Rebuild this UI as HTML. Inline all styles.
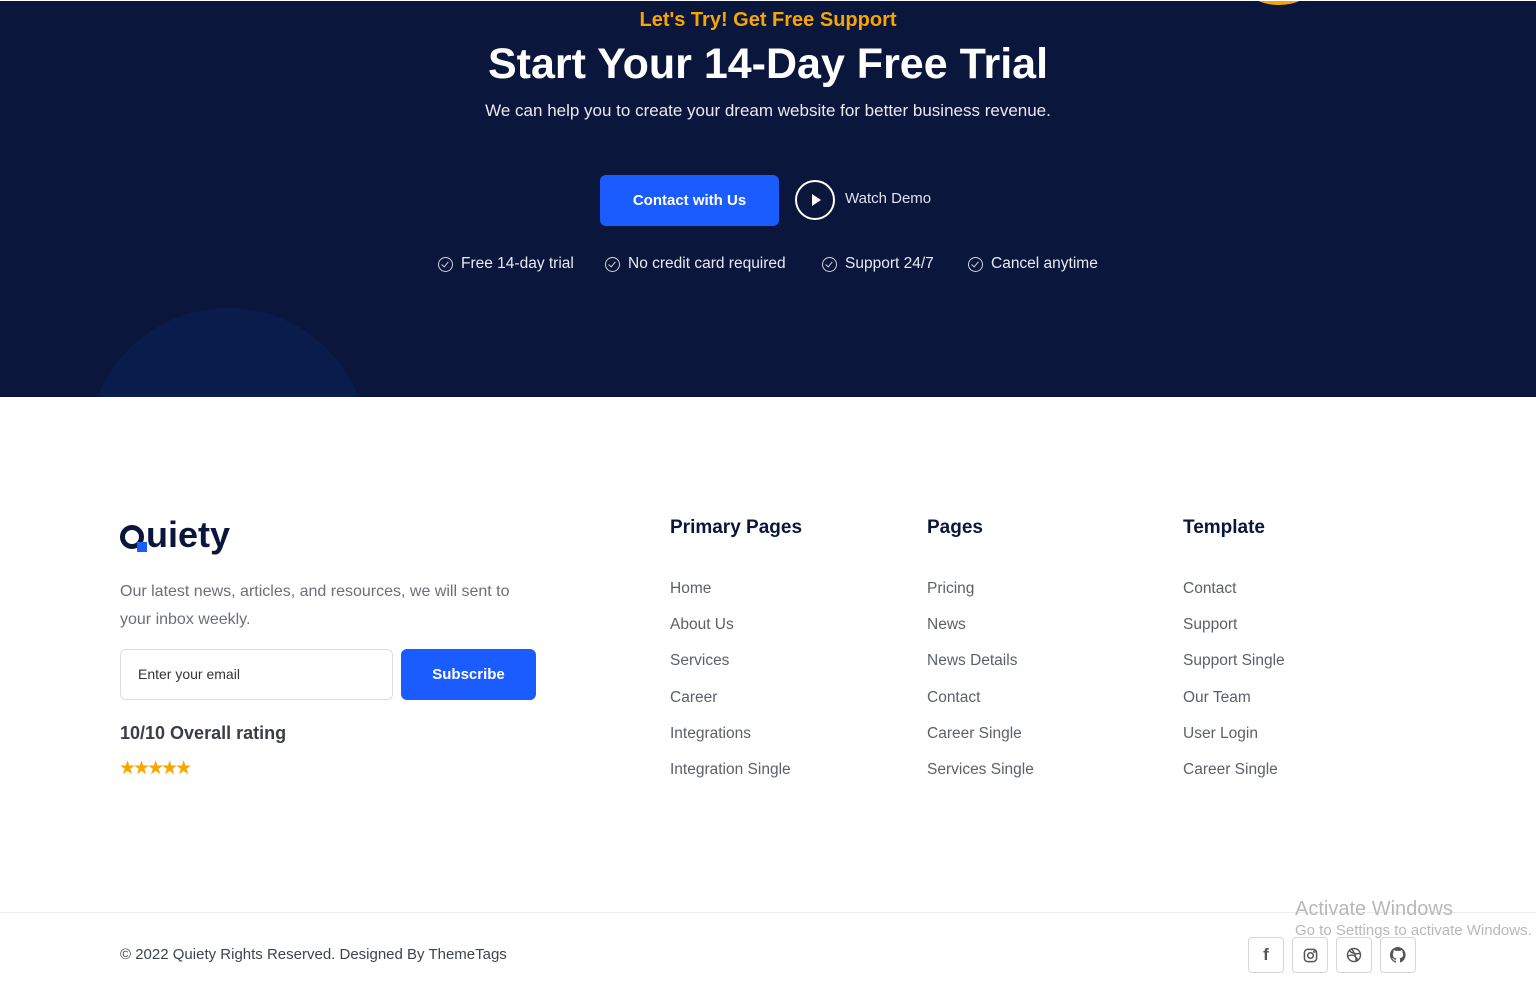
<!DOCTYPE html>
<html><head><style>
*{margin:0;padding:0;box-sizing:border-box}
body{width:1536px;height:990px;overflow:hidden;background:#fff;font-family:"Liberation Sans",sans-serif;position:relative}
.hero{position:absolute;left:0;top:0;width:1536px;height:397px;background:#0b163d;overflow:hidden;border-top:1px solid #fff}
.blob{position:absolute;left:88px;top:307px;width:280px;height:280px;border-radius:50%;background:#0a1c4c}
.sun{position:absolute;left:1248px;top:-28px;width:62px;height:32px;border-radius:50%;background:#f7a600}
.c{position:absolute;left:0;width:1536px;text-align:center}
.tag{top:8px;color:#f7a600;font-weight:bold;font-size:20px}
h1{top:39px;color:#fff;font-size:43px;font-weight:bold;letter-spacing:0}
.sub{top:100px;color:#e8eaf0;font-size:17px}
.btn{position:absolute;left:600px;top:174px;width:179px;height:51px;background:#1a5cff;color:#fff;border-radius:6px;font-weight:bold;font-size:15px;text-align:center;line-height:51px}
.play{position:absolute;left:795px;top:179px;width:40px;height:40px;border:2px solid #fff;border-radius:50%}
.play:after{content:"";position:absolute;left:15px;top:12px;border-left:9px solid #fff;border-top:6px solid transparent;border-bottom:6px solid transparent}
.wd{position:absolute;left:845px;top:189px;color:#dfe2ea;font-size:15px}
.feat{position:absolute;top:254px;color:#e8eaf0;font-size:15.5px;display:flex;align-items:center;gap:8px}
.feat i{width:15px;height:15px;border:1.5px solid #cfd3dd;border-radius:50%;display:inline-block;position:relative}
.feat i:after{content:"";position:absolute;left:4px;top:2px;width:3px;height:6px;border:solid #cfd3dd;border-width:0 1.5px 1.5px 0;transform:rotate(40deg)}
.logo{position:absolute;left:120px;top:514px;font-size:36px;font-weight:bold;color:#0b163d}
.desc{position:absolute;left:120px;top:578px;width:415px;color:#6b6f7b;font-size:16px;line-height:28px}
.inp{position:absolute;left:120px;top:649px;width:273px;height:51px;border:1.5px solid #dcdde2;border-radius:6px;padding-left:17px;line-height:49px;font-size:14px;color:#333}
.sbtn{position:absolute;left:401px;top:649px;width:135px;height:51px;background:#1a5cff;border-radius:6px;color:#fff;font-weight:bold;font-size:15px;text-align:center;line-height:51px}
.rate{position:absolute;left:120px;top:723px;font-size:18px;font-weight:bold;color:#3a3d48}
.stars{position:absolute;left:119px;top:757px;color:#f7a600;font-size:19px;letter-spacing:-3px}
.col{position:absolute;top:517px}
.col h3{font-size:19px;color:#0b163d;margin-bottom:41px;font-weight:bold}
.col a{display:block;color:#5c606b;font-size:15.5px;height:36.2px;text-decoration:none}
.line{position:absolute;left:0;top:912px;width:1536px;height:1px;background:#ebecef}
.copy{position:absolute;left:120px;top:946px;font-size:15px;color:#3f4350}
.soc{position:absolute;top:937px;width:36px;height:36px;border:1.5px solid #d6d7db;border-radius:4px;display:flex;align-items:center;justify-content:center}
.aw{position:absolute;left:1295px;top:898px;color:#b8b8b8;font-size:20px}
.aw2{position:absolute;left:1295px;top:922px;color:#b8b8b8;font-size:15px}
</style></head><body>
<div class="hero">
<div class="blob"></div><div class="sun"></div>
<div class="c tag">Let's Try! Get Free Support</div>
<h1 class="c">Start Your 14-Day Free Trial</h1>
<div class="c sub">We can help you to create your dream website for better business revenue.</div>
<div class="btn">Contact with Us</div>
<div class="play"></div><div class="wd">Watch Demo</div>
<div class="feat" style="left:438px"><i></i>Free 14-day trial</div>
<div class="feat" style="left:605px"><i></i>No credit card required</div>
<div class="feat" style="left:822px"><i></i>Support 24/7</div>
<div class="feat" style="left:968px"><i></i>Cancel anytime</div>
</div>
<div class="logo"><span style="display:inline-block;width:24px;height:24px;border:5px solid #0b163d;border-radius:50%;position:relative;top:2px;margin-right:2px"><span style="position:absolute;right:-8px;bottom:-8px;width:10px;height:10px;background:#1a5cff"></span></span>uiety</div>
<div class="desc">Our latest news, articles, and resources, we will sent to your inbox weekly.</div>
<div class="inp">Enter your email</div>
<div class="sbtn">Subscribe</div>
<div class="rate">10/10 Overall rating</div>
<div class="stars">★★★★★</div>
<div class="col" style="left:670px"><h3>Primary Pages</h3><a>Home</a><a>About Us</a><a>Services</a><a>Career</a><a>Integrations</a><a>Integration Single</a></div>
<div class="col" style="left:927px"><h3>Pages</h3><a>Pricing</a><a>News</a><a>News Details</a><a>Contact</a><a>Career Single</a><a>Services Single</a></div>
<div class="col" style="left:1183px"><h3>Template</h3><a>Contact</a><a>Support</a><a>Support Single</a><a>Our Team</a><a>User Login</a><a>Career Single</a></div>
<div class="line"></div>
<div class="copy">© 2022 Quiety Rights Reserved. Designed By ThemeTags</div>
<div class="aw">Activate Windows</div><div class="aw2">Go to Settings to activate Windows.</div>
<div class="soc" style="left:1248px"><span style="font-weight:bold;color:#555;font-size:17px">f</span></div>
<div class="soc" style="left:1292px"><svg width="15" height="15" viewBox="0 0 16 16" fill="none" stroke="#555" stroke-width="1.6"><rect x="1.5" y="1.5" width="13" height="13" rx="3.5"/><circle cx="8" cy="8" r="3"/><circle cx="12" cy="4" r=".5"/></svg></div>
<div class="soc" style="left:1336px"><svg width="16" height="16" viewBox="0 0 16 16" fill="none" stroke="#555" stroke-width="1.4"><circle cx="8" cy="8" r="6.5"/><path d="M3 3.5c3 3 6 3.5 11 3M2 9c4-2 8-1 10 5M5.5 2c3 3 5 8 4.5 13"/></svg></div>
<div class="soc" style="left:1380px"><svg width="16" height="16" viewBox="0 0 16 16" fill="#555"><path d="M8 0a8 8 0 00-2.5 15.6c.4 0 .5-.2.5-.4v-1.5c-2.2.5-2.7-1-2.7-1-.4-.9-.9-1.2-.9-1.2-.7-.5.1-.5.1-.5.8.1 1.2.8 1.2.8.7 1.3 1.9.9 2.3.7.1-.5.3-.9.5-1.1-1.8-.2-3.6-.9-3.6-4 0-.9.3-1.6.8-2.1-.1-.2-.4-1 .1-2.1 0 0 .7-.2 2.2.8a7.5 7.5 0 014 0c1.5-1 2.2-.8 2.2-.8.4 1.1.2 1.9.1 2.1.5.6.8 1.3.8 2.1 0 3.1-1.900 3.7-3.6 3.9.3.3.5.8.5 1.5v2.2c0 .2.1.5.6.4A8 8 0 008 0z"/></svg></div>
</body></html>
